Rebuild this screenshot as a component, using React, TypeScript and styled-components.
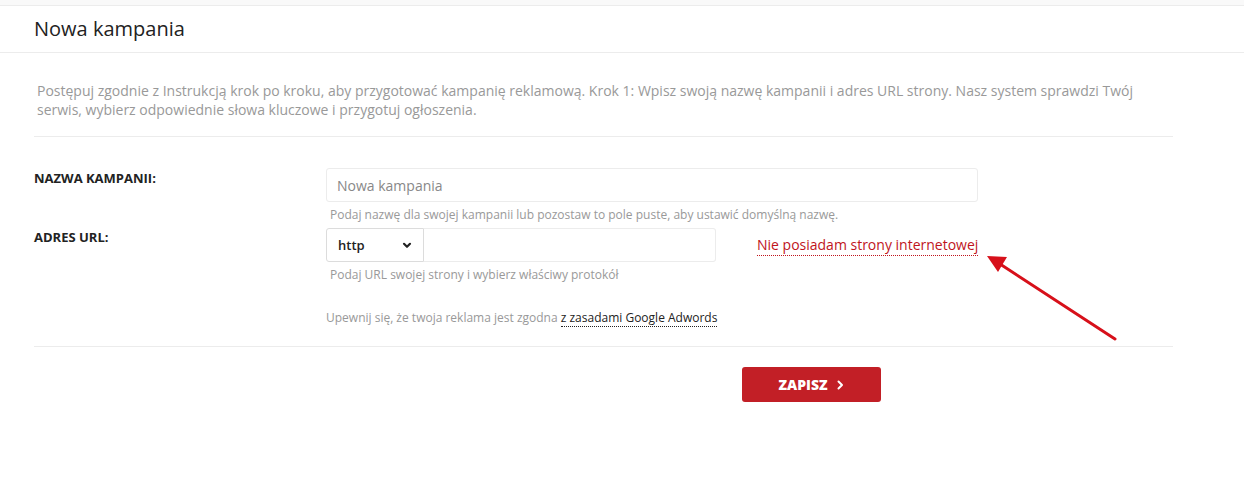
import React from 'react';
import styled, { createGlobalStyle } from 'styled-components';

const GlobalStyle = createGlobalStyle`
    html, body {
        margin: 0;
        padding: 0;
        background: #fff;
        font-family: 'Open Sans', 'Liberation Sans', sans-serif;
        color: #222;
    }
    * {
        box-sizing: border-box;
    }
`;

const Page = styled.div`
    position: relative;
    width: 1244px;
    height: 497px;
    overflow: hidden;
`;

const TopStrip = styled.div`
    height: 6px;
    background: #f9f9f9;
    border-bottom: 1px solid #ececec;
`;

const Header = styled.div`
    height: 47px;
    display: flex;
    align-items: center;
    padding: 0 34px 2px;
    border-bottom: 1px solid #ececec;
`;

const Title = styled.h1`
    margin: 0;
    font-size: 20px;
    font-weight: 400;
    color: #222;
`;

const Body = styled.div`
    padding: 0 71px 0 34px;
`;

const Intro = styled.p`
    margin: 0;
    padding: 28px 3px 17px;
    font-size: 14px;
    line-height: 19px;
    color: #999;
    border-bottom: 1px solid #ececec;
`;

const Form = styled.div`
    display: grid;
    grid-template-columns: 292px 1fr;
    padding-top: 31px;
`;

const Label = styled.div<{ $top: number }>`
    padding-top: ${(p) => p.$top}px;
    font-size: 13px;
    font-weight: 700;
    color: #222;
    text-transform: uppercase;
`;

const Field = styled.div`
    display: flex;
    flex-direction: column;
    padding-bottom: 4px;
`;

const TextInput = styled.input<{ $width: number }>`
    width: ${(p) => p.$width}px;
    height: 34px;
    padding: 0 10px;
    border: 1px solid #ececec;
    border-radius: 3px;
    font-family: inherit;
    font-size: 14px;
    color: #444;
    outline: none;
    &::placeholder {
        color: #888;
    }
`;

const Help = styled.div`
    margin-top: 4px;
    padding-left: 4px;
    font-size: 12px;
    line-height: 18px;
    color: #999;
`;

const UrlRow = styled.div`
    display: flex;
    align-items: center;
`;

const Select = styled.div`
    width: 98px;
    height: 34px;
    display: flex;
    align-items: center;
    justify-content: space-between;
    padding: 0 10px 0 11px;
    border: 1px solid #dcdcdc;
    border-radius: 3px 0 0 3px;
    font-size: 13px;
    font-weight: 600;
    color: #222;
`;

const UrlInput = styled(TextInput)`
    border-left: none;
    border-radius: 0 3px 3px 0;
`;

const NoSiteLink = styled.a`
    margin-left: 41px;
    padding-bottom: 1px;
    font-size: 14px;
    color: #c0141c;
    text-decoration: none;
    border-bottom: 1px dotted #c0141c;
`;

const Notice = styled.div`
    grid-column: 2;
    margin-top: 21px;
    font-size: 12px;
    line-height: 18px;
    color: #999;
`;

const NoticeLink = styled.a`
    color: #222;
    text-decoration: none;
    border-bottom: 1px dotted #222;
`;

const Divider = styled.hr`
    margin: 19px 0 0;
    border: none;
    border-top: 1px solid #ececec;
`;

const Footer = styled.div`
    padding: 20px 0 0 708px;
`;

const SaveButton = styled.button`
    width: 139px;
    height: 35px;
    display: flex;
    align-items: center;
    justify-content: center;
    gap: 8px;
    border: none;
    border-radius: 3px;
    background: #c21f26;
    color: #fff;
    font-family: inherit;
    font-size: 14px;
    font-weight: 800;
    cursor: pointer;
`;

const Arrow = styled.svg`
    position: absolute;
    left: 980px;
    top: 250px;
    pointer-events: none;
`;

const Chevron = ({ size, stroke }: { size: number; stroke: number }) => (
    <svg width={size} height={size} viewBox="0 0 10 10" fill="none">
        <path d="M2.5 4 L5 6.5 L7.5 4" stroke="#222" strokeWidth={stroke} strokeLinecap="round" strokeLinejoin="round" />
    </svg>
);

const App: React.FC = () => {
    return (
        <Page>
            <GlobalStyle />
            <TopStrip />
            <Header>
                <Title>Nowa kampania</Title>
            </Header>
            <Body>
                <Intro>
                    Postępuj zgodnie z Instrukcją krok po kroku, aby przygotować kampanię reklamową. Krok 1: Wpisz swoją
                    nazwę kampanii i adres URL strony. Nasz system sprawdzi Twój serwis, wybierz odpowiednie słowa
                    kluczowe i przygotuj ogłoszenia.
                </Intro>
                <Form>
                    <Label $top={1}>Nazwa kampanii:</Label>
                    <Field>
                        <TextInput $width={652} placeholder="Nowa kampania" />
                        <Help>Podaj nazwę dla swojej kampanii lub pozostaw to pole puste, aby ustawić domyślną nazwę.</Help>
                    </Field>
                    <Label $top={0}>Adres URL:</Label>
                    <Field>
                        <UrlRow>
                            <Select>
                                http
                                <Chevron size={12} stroke={1.8} />
                            </Select>
                            <UrlInput $width={292} />
                            <NoSiteLink href="#">Nie posiadam strony internetowej</NoSiteLink>
                        </UrlRow>
                        <Help>Podaj URL swojej strony i wybierz właściwy protokół</Help>
                    </Field>
                    <Notice>
                        Upewnij się, że twoja reklama jest zgodna <NoticeLink href="#">z zasadami Google Adwords</NoticeLink>
                    </Notice>
                </Form>
                <Divider />
                <Footer>
                    <SaveButton>
                        ZAPISZ
                        <svg width="9" height="10" viewBox="0 0 9 10" fill="none">
                            <path d="M2.5 1.5 L6 5 L2.5 8.5" stroke="#fff" strokeWidth="2" strokeLinecap="round" strokeLinejoin="round" />
                        </svg>
                    </SaveButton>
                </Footer>
            </Body>
            <Arrow width="150" height="100" viewBox="0 0 150 100">
                <line x1="135" y1="89" x2="20" y2="14" stroke="#d7101a" strokeWidth="3" strokeLinecap="round" />
                <polygon points="7,6 27,7 18,22" fill="#d7101a" />
            </Arrow>
        </Page>
    );
};

export default App;
